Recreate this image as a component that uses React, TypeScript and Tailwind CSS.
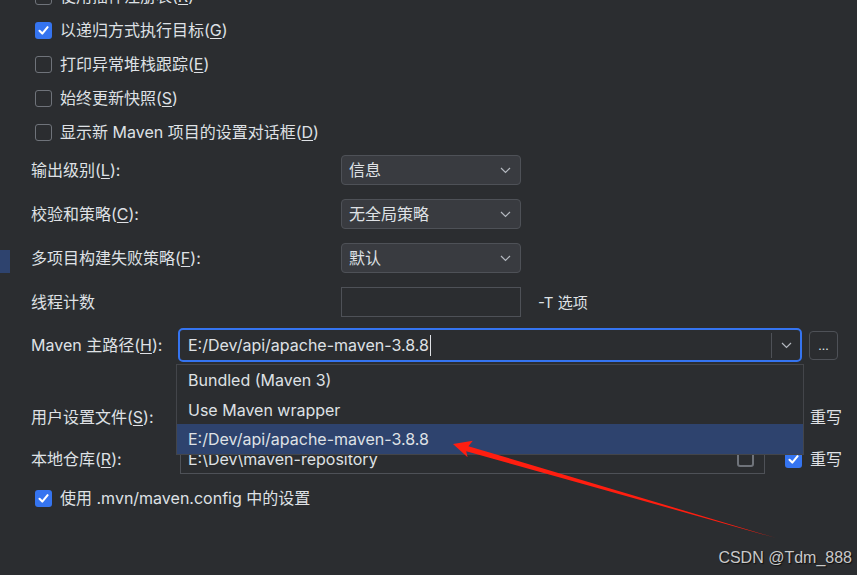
import React from "react";

const FONT = { fontFamily: "Inter, 'Noto Sans CJK SC', sans-serif" };

function Check({ checked }: { checked?: boolean }) {
  return checked ? (
    <div className="w-[17px] h-[17px] rounded-[3px] bg-[#3574f0] flex items-center justify-center shrink-0">
      <svg width="13" height="13" viewBox="0 0 13 13">
        <path d="M2.5 6.8 L5.3 9.6 L10.6 3.2" fill="none" stroke="#ffffff" strokeWidth="2.1" strokeLinecap="round" strokeLinejoin="round" />
      </svg>
    </div>
  ) : (
    <div className="w-[17px] h-[17px] rounded-[3px] border border-[#6f737a] bg-[#2b2d30] shrink-0" />
  );
}

function M({ c }: { c: string }) {
  return <span className="underline underline-offset-2 decoration-1">{c}</span>;
}

function Chevron() {
  return (
    <svg width="11" height="7" viewBox="0 0 11 7">
      <polyline points="1,1 5.5,5.5 10,1" fill="none" stroke="#b4b8bf" strokeWidth="1.2" />
    </svg>
  );
}

function CheckRow({ checked, children }: { checked?: boolean; children: React.ReactNode }) {
  return (
    <div className="h-[34px] flex items-center gap-[8px] pl-[4px]">
      <Check checked={checked} />
      <span>{children}</span>
    </div>
  );
}

function Combo({ value }: { value: string }) {
  return (
    <div className="w-[180px] h-[30px] rounded-[4px] border border-[#4e5157] bg-[#393b40] flex items-center justify-between pl-[7px] pr-[9px]">
      <span>{value}</span>
      <Chevron />
    </div>
  );
}

export default function App() {
  return (
    <div className="relative w-[857px] h-[575px] overflow-hidden bg-[#2b2d30] text-[#dfe1e5] text-[16px] leading-none" style={FONT}>
      <div className="flex">
        <div className="w-[10px] shrink-0">
          <div className="mt-[250px] h-[23px] bg-[#2e436e]" />
        </div>
        <div className="flex-1 pl-[21px] -mt-[21px] flex flex-col">
          <CheckRow>使用插件注册表(<M c="R" />)</CheckRow>
          <CheckRow checked>以递归方式执行目标(<M c="G" />)</CheckRow>
          <CheckRow>打印异常堆栈跟踪(<M c="E" />)</CheckRow>
          <CheckRow>始终更新快照(<M c="S" />)</CheckRow>
          <CheckRow>显示新 Maven 项目的设置对话框(<M c="D" />)</CheckRow>

          <div className="mt-[6px] flex flex-col gap-[14px]">
            <div className="flex items-center h-[30px]">
              <div className="w-[310px]">输出级别(<M c="L" />):</div>
              <Combo value="信息" />
            </div>
            <div className="flex items-center h-[30px]">
              <div className="w-[310px]">校验和策略(<M c="C" />):</div>
              <Combo value="无全局策略" />
            </div>
            <div className="flex items-center h-[30px]">
              <div className="w-[310px]">多项目构建失败策略(<M c="F" />):</div>
              <Combo value="默认" />
            </div>
            <div className="flex items-center h-[30px]">
              <div className="w-[310px]">线程计数</div>
              <div className="w-[180px] h-[30px] border border-[#4e5157] bg-[#2b2d30]" />
              <span className="ml-[17px] text-[15px]">-T 选项</span>
            </div>
          </div>

          <div className="mt-[11px] flex items-center h-[34px]">
            <div className="w-[147px]">Maven 主路径(<M c="H" />):</div>
            <div className="w-[624px] h-[34px] rounded-[5px] border-2 border-[#3574f0] bg-[#2b2d30] flex items-center">
              <span className="ml-[8px] flex-1 flex items-center">
                E:/Dev/api/apache-maven-3.8.8
                <span className="ml-[1px] w-[1px] h-[21px] bg-[#dfe1e5]" />
              </span>
              <div className="w-[1px] h-[25px] bg-[#4e5157]" />
              <div className="w-[28px] flex justify-center">
                <Chevron />
              </div>
            </div>
            <div className="ml-[7px] w-[29px] h-[29px] rounded-[4px] border border-[#4e5157] flex items-center justify-center text-[#dfe1e5] text-[12px] pt-[2px]">
              ...
            </div>
          </div>

          <div className="mt-[40px] flex items-center h-[30px]">
            <div className="w-[149px]">用户设置文件(<M c="S" />):</div>
            <div className="w-[585px] h-[30px] border border-[#4e5157]" />
            <div className="ml-[20px] flex items-center gap-[8px]">
              <Check checked />
              <span>重写</span>
            </div>
          </div>

          <div className="mt-[12px] flex items-center h-[30px]">
            <div className="w-[149px]">本地仓库(<M c="R" />):</div>
            <div className="w-[585px] h-[30px] border border-[#4e5157] flex items-center justify-between pl-[7px] pr-[10px]">
              <span>E:\Dev\maven-repository</span>
              <div className="w-[17px] h-[16px] rounded-[3px] border-2 border-[#6f737a]" />
            </div>
            <div className="ml-[20px] flex items-center gap-[8px]">
              <Check checked />
              <span>重写</span>
            </div>
          </div>

          <div className="mt-[7px]">
            <CheckRow checked>使用 .mvn/maven.config 中的设置</CheckRow>
          </div>
        </div>
      </div>

      {/* dropdown popup */}
      <div className="absolute left-[176px] top-[364px] w-[628px] h-[91px] border border-[#43454a] bg-[#2b2d30] flex flex-col z-10">
        <div className="h-[30px] flex items-center pl-[11px]">Bundled (Maven 3)</div>
        <div className="h-[30px] flex items-center pl-[11px]">Use Maven wrapper</div>
        <div className="h-[30px] flex items-center pl-[11px] bg-[#2e436e]">E:/Dev/api/apache-maven-3.8.8</div>
      </div>

      {/* red arrow annotation */}
      <svg className="absolute left-0 top-0 z-20 pointer-events-none" width="857" height="575" viewBox="0 0 857 575">
        <polygon
          points="453,444 472.8,440.8 468.4,446.2 776,538 466.2,451.2 467.6,457.2"
          fill="#ff1e10"
        />
      </svg>

      {/* watermark */}
      <div
        className="absolute right-[5px] bottom-[9px] z-30 text-[16px] text-[#c9c9c9]"
        style={{ fontFamily: "'Liberation Sans', Arial, sans-serif", textShadow: "1px 1px 1px #111" }}
      >
        CSDN @Tdm_888
      </div>
    </div>
  );
}
